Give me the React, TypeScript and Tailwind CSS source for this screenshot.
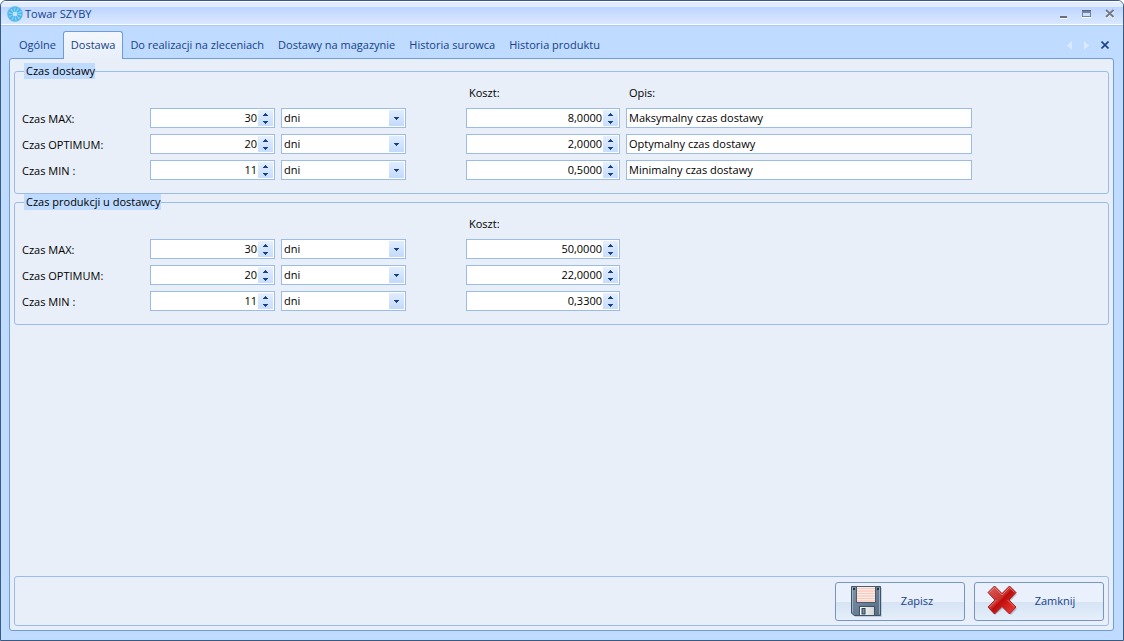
import { useState } from "react";

const tabs = [
  "Ogólne",
  "Dostawa",
  "Do realizacji na zleceniach",
  "Dostawy na magazynie",
  "Historia surowca",
  "Historia produktu",
];

type Row = {
  label: string;
  days: string;
  cost: string;
  note?: string;
};

const deliveryRows: Row[] = [
  { label: "Czas MAX:", days: "30", cost: "8,0000", note: "Maksymalny czas dostawy" },
  { label: "Czas OPTIMUM:", days: "20", cost: "2,0000", note: "Optymalny czas dostawy" },
  { label: "Czas MIN :", days: "11", cost: "0,5000", note: "Minimalny czas dostawy" },
];

const productionRows: Row[] = [
  { label: "Czas MAX:", days: "30", cost: "50,0000" },
  { label: "Czas OPTIMUM:", days: "20", cost: "22,0000" },
  { label: "Czas MIN :", days: "11", cost: "0,3300" },
];

function AppIcon() {
  return (
    <svg className="size-4" viewBox="0 0 16 16" aria-hidden="true">
      <circle cx="8" cy="8" r="5" fill="none" stroke="#45b4ec" strokeWidth="5.4" />
      <circle cx="8" cy="8" r="4.500" fill="none" stroke="#86d0f6" strokeWidth="4" strokeDasharray="1.400 1.400" />
      <circle cx="8" cy="8" r="7.200" fill="none" stroke="#8ccaf5" strokeWidth="1" strokeDasharray="1.5 1.5" />
      <circle cx="8" cy="8" r="2.300" fill="#c4e4fb" />
    </svg>
  );
}

function FloppyIcon() {
  return (
    <svg className="size-8" viewBox="0 1 32 32" aria-hidden="true">
      <defs>
        <linearGradient id="disk" x1="0" y1="0" x2="1" y2="1">
          <stop offset="0" stopColor="#7d93aa" />
          <stop offset="1" stopColor="#566c82" />
        </linearGradient>
        <linearGradient id="shutter" x1="0" y1="0" x2="1" y2="0">
          <stop offset="0" stopColor="#ffffff" />
          <stop offset="1" stopColor="#d3d3d3" />
        </linearGradient>
      </defs>
      <path d="M3 3h29v29H5z" fill="#8494a5" opacity="0.35" />
      <path d="M1.500 1.500h29v29H4l-2.500-2.500z" fill="url(#disk)" stroke="#3f5368" strokeLinejoin="round" />
      <path d="M2.500 27.500V2.500M29.500 29.500V2.500" stroke="#a9bbcc" strokeWidth="0.8" fill="none" />
      <rect x="3" y="3" width="2" height="2" fill="#24303d" />
      <rect x="27" y="3" width="2" height="2" fill="#24303d" />
      <rect x="6.500" y="1.500" width="19" height="16" fill="#fff6f2" stroke="#4b5c6e" />
      <path
        d="M7 3.500h18M7 6h18M7 8.500h18M7 11h18M7 13.500h18M7 16h18"
        stroke="#f9c9bd"
        strokeWidth="1.300"
      />
      <rect x="9.500" y="21.500" width="15" height="9" fill="url(#shutter)" stroke="#3f5368" />
      <rect x="12" y="23.500" width="3" height="5.500" fill="#7b8fa3" stroke="#2f4052" />
    </svg>
  );
}

function CrossIcon() {
  return (
    <svg className="size-8" viewBox="0 1 32 32" aria-hidden="true">
      <defs>
        <linearGradient id="cross" x1="0" y1="0" x2="1" y2="1">
          <stop offset="0" stopColor="#d9605b" />
          <stop offset="0.45" stopColor="#c8302d" />
          <stop offset="0.5" stopColor="#bd0c0c" />
          <stop offset="1" stopColor="#f5423c" />
        </linearGradient>
      </defs>
      <path
        d="M8 3l8 6.500L24 3l6 6-7 7.500 7 7.500-6 6-8-6.500L8 30l-6-6 7-7.500L2 9z"
        fill="#6e7c90"
        opacity="0.4"
      />
      <path
        d="M7.500 1l7.500 7.500L22.500 1 29 7.500 22 15l7 7-6.500 7-7.500-7.500L7.500 29 1 22l7-7-7-7.500z"
        fill="url(#cross)"
        stroke="#a8201f"
        strokeLinejoin="round"
      />
      <path
        d="M2.500 7.500l5-5 7.500 7.500 7.500-7.500 5 5M2.500 22L9.500 15M27.500 22l-7-7"
        fill="none"
        stroke="#eba29e"
        strokeWidth="0.8"
        opacity="0.8"
      />
    </svg>
  );
}

function Spinner({ label, value }: { label: string; value: string }) {
  return (
    <div className="flex h-5 border border-[#9bbbe8] bg-white p-px">
      <input
        type="text"
        inputMode="decimal"
        aria-label={label}
        defaultValue={value}
        className="min-w-0 flex-1 bg-transparent pr-px text-right outline-none"
      />
      <div className="flex w-[15px] flex-col">
        <button
          type="button"
          aria-label={`${label} w górę`}
          className="flex flex-1 items-center justify-center bg-linear-to-b from-[#e6f0ff] to-[#d3e4fd]"
        >
          <svg className="h-[3px] w-[5px]" viewBox="0 0 5 3" shapeRendering="crispEdges">
            <path d="M2 0h1v1h1v1h1v1H0V2h1V1h1z" fill="#15428b" />
          </svg>
        </button>
        <button
          type="button"
          aria-label={`${label} w dół`}
          className="flex flex-1 items-center justify-center bg-linear-to-b from-[#d3e5ff] to-[#c8defd]"
        >
          <svg className="h-[3px] w-[5px]" viewBox="0 0 5 3" shapeRendering="crispEdges">
            <path d="M0 0h5v1H4v1H3v1H2V2H1V1H0z" fill="#15428b" />
          </svg>
        </button>
      </div>
    </div>
  );
}

function UnitSelect({ label }: { label: string }) {
  return (
    <div className="relative h-5 border border-[#9bbbe8] bg-white">
      <select
        aria-label={label}
        defaultValue="dni"
        className="block h-full w-full appearance-none bg-transparent pl-[2px] outline-none"
      >
        <option>dni</option>
        <option>tygodnie</option>
      </select>
      <span className="pointer-events-none absolute inset-y-px right-px flex w-[15px] items-center justify-center bg-linear-to-b from-[#e1edff] to-[#c3dafb]">
        <svg className="h-[3px] w-[5px]" viewBox="0 0 5 3" shapeRendering="crispEdges">
          <path d="M0 0h5v1H4v1H3v1H2V2H1V1H0z" fill="#15428b" />
        </svg>
      </span>
    </div>
  );
}

function TimeGroup({ title, rows, withNotes }: { title: string; rows: Row[]; withNotes?: boolean }) {
  return (
    <fieldset className="min-w-0 rounded-[3px] border border-[#9bbbe8] pr-2 pb-[13px] pl-[7px]">
      <legend className="ml-[2px] h-4 bg-[#bfdbff] pl-[2px] leading-4">{title}</legend>
      <div className="grid grid-cols-[122px_125px_125px_48px_154px_minmax(0,346px)] gap-1.5 pt-[3px]">
        <span className="col-start-5 h-5 pl-[3px] leading-[22px]">Koszt:</span>
        {withNotes && <span className="h-5 pl-[3px] leading-[22px]">Opis:</span>}
        {rows.map((row) => (
          <div key={row.label} className="col-span-full grid h-5 grid-cols-subgrid">
            <span className="h-5 leading-[22px]">{row.label}</span>
            <Spinner label={`${title} ${row.label}`} value={row.days} />
            <UnitSelect label={`${title} ${row.label} jednostka`} />
            <span />
            <Spinner label={`${title} ${row.label} koszt`} value={row.cost} />
            {withNotes && (
              <div className="flex h-5 min-w-0 border border-[#9bbbe8] bg-white p-px">
                <input
                  type="text"
                  aria-label={`${row.label} opis`}
                  defaultValue={row.note}
                  className="min-w-0 flex-1 bg-transparent pl-px outline-none"
                />
              </div>
            )}
          </div>
        ))}
      </div>
    </fieldset>
  );
}

function TitleBar() {
  return (
    <header className="flex h-[25px] items-center border-t border-b border-t-white border-b-[#a9c9f5] bg-linear-to-b from-[#e2ecfc] from-20% via-[#bcd5ff] via-20% to-[#dce9ff] pr-[7px] pl-[6px] shadow-[inset_0_-1px_0_#fff]">
      <AppIcon />
      <h1 className="flex-1 pl-[2px] leading-4">Towar SZYBY</h1>
      <div className="flex items-center gap-3">
        <button type="button" aria-label="Minimalizuj">
          <svg className="h-3 w-3" viewBox="0 0 12 12" shapeRendering="crispEdges">
            <path d="M4 8h7v2H4z" fill="#6b6f78" />
            <path d="M4 10h7v1H4z" fill="#fff" />
          </svg>
        </button>
        <button type="button" aria-label="Maksymalizuj">
          <svg className="h-3 w-3" viewBox="0 0 12 12" shapeRendering="crispEdges">
            <path d="M2 2h9v7H2z" fill="#6f83a5" />
            <path d="M2 2h9v1H2z" fill="#5e6470" />
            <path d="M3 5h7v3H3z" fill="#cfdff7" />
            <path d="M2 9h9v1H2z" fill="#fff" />
          </svg>
        </button>
        <button type="button" aria-label="Zamknij okno">
          <svg className="h-3 w-3" viewBox="0 0 12 12">
            <path d="M2 3l7.500 7M9.500 3L2 10" stroke="#fff" strokeWidth="2" />
            <path d="M2 2l7.500 7M9.500 2L2 9" stroke="#737b8a" strokeWidth="2" />
          </svg>
        </button>
      </div>
    </header>
  );
}

export default function App() {
  const [active, setActive] = useState("Dostawa");

  return (
    <div className="flex min-h-screen flex-col overflow-hidden rounded-t-md border border-[#3b5a82] bg-[#bfdbff] font-['Open_Sans','Noto_Sans',sans-serif] text-[11px] text-[#15428b]">
      <TitleBar />
      <div className="flex flex-1 flex-col pt-[5px] pr-[9px] pb-[9px] pl-2">
        <nav className="z-10 -mb-px flex h-7 items-stretch pl-[3px]" role="tablist">
          {tabs.map((tab) => (
            <button
              key={tab}
              type="button"
              role="tab"
              aria-selected={tab === active}
              onClick={() => setActive(tab)}
              className={
                tab === active
                  ? "rounded-t-[3px] border border-b-0 border-[#6f9bd8] bg-linear-to-b from-[#f3f7fd] to-[#e8eff9] px-[7px] whitespace-nowrap"
                  : "px-[7px] whitespace-nowrap"
              }
            >
              {tab}
            </button>
          ))}
          <div className="ml-auto flex items-center gap-3 pr-[5px]">
            <button type="button" aria-label="Poprzednia karta">
              <svg className="h-[9px] w-[5px]" viewBox="0 0 5 9">
                <path d="M5 0v9L0 4.500z" fill="#dceaff" />
              </svg>
            </button>
            <button type="button" aria-label="Następna karta">
              <svg className="h-[9px] w-[5px]" viewBox="0 0 5 9">
                <path d="M0 0v9l5-4.500z" fill="#dceaff" />
              </svg>
            </button>
            <button type="button" aria-label="Zamknij kartę">
              <svg className="h-2 w-2" viewBox="0 0 8 8">
                <path d="M0.500 0.500l7 7M7.500 0.500l-7 7" stroke="#15428b" strokeWidth="1.600" />
              </svg>
            </button>
          </div>
        </nav>
        <main className="flex flex-1 flex-col rounded-[3px] border border-[#6f9bd8] bg-[#e8eff9] p-1 text-black">
          <TimeGroup title="Czas dostawy" rows={deliveryRows} withNotes />
          <TimeGroup title="Czas produkcji u dostawcy" rows={productionRows} />
          <footer className="mt-auto flex justify-end gap-[9px] rounded-[3px] border border-[#9bbbe8] pt-[5px] pr-1 pb-1 text-[#15428b]">
            <button
              type="button"
              className="flex h-[39px] w-[130px] items-center rounded-[3px] border border-[#7795c4] bg-linear-to-b from-[#eaf1fc] from-50% via-[#d5e3f3] via-50% to-[#e6effb] pl-[14px]"
            >
              <FloppyIcon />
              <span className="flex-1 pr-3 text-center">Zapisz</span>
            </button>
            <button
              type="button"
              className="flex h-[39px] w-[130px] items-center rounded-[3px] border border-[#7795c4] bg-linear-to-b from-[#eaf1fc] from-50% via-[#d5e3f3] via-50% to-[#e6effb] pl-3"
            >
              <CrossIcon />
              <span className="flex-1 pr-3 text-center">Zamknij</span>
            </button>
          </footer>
        </main>
      </div>
    </div>
  );
}
